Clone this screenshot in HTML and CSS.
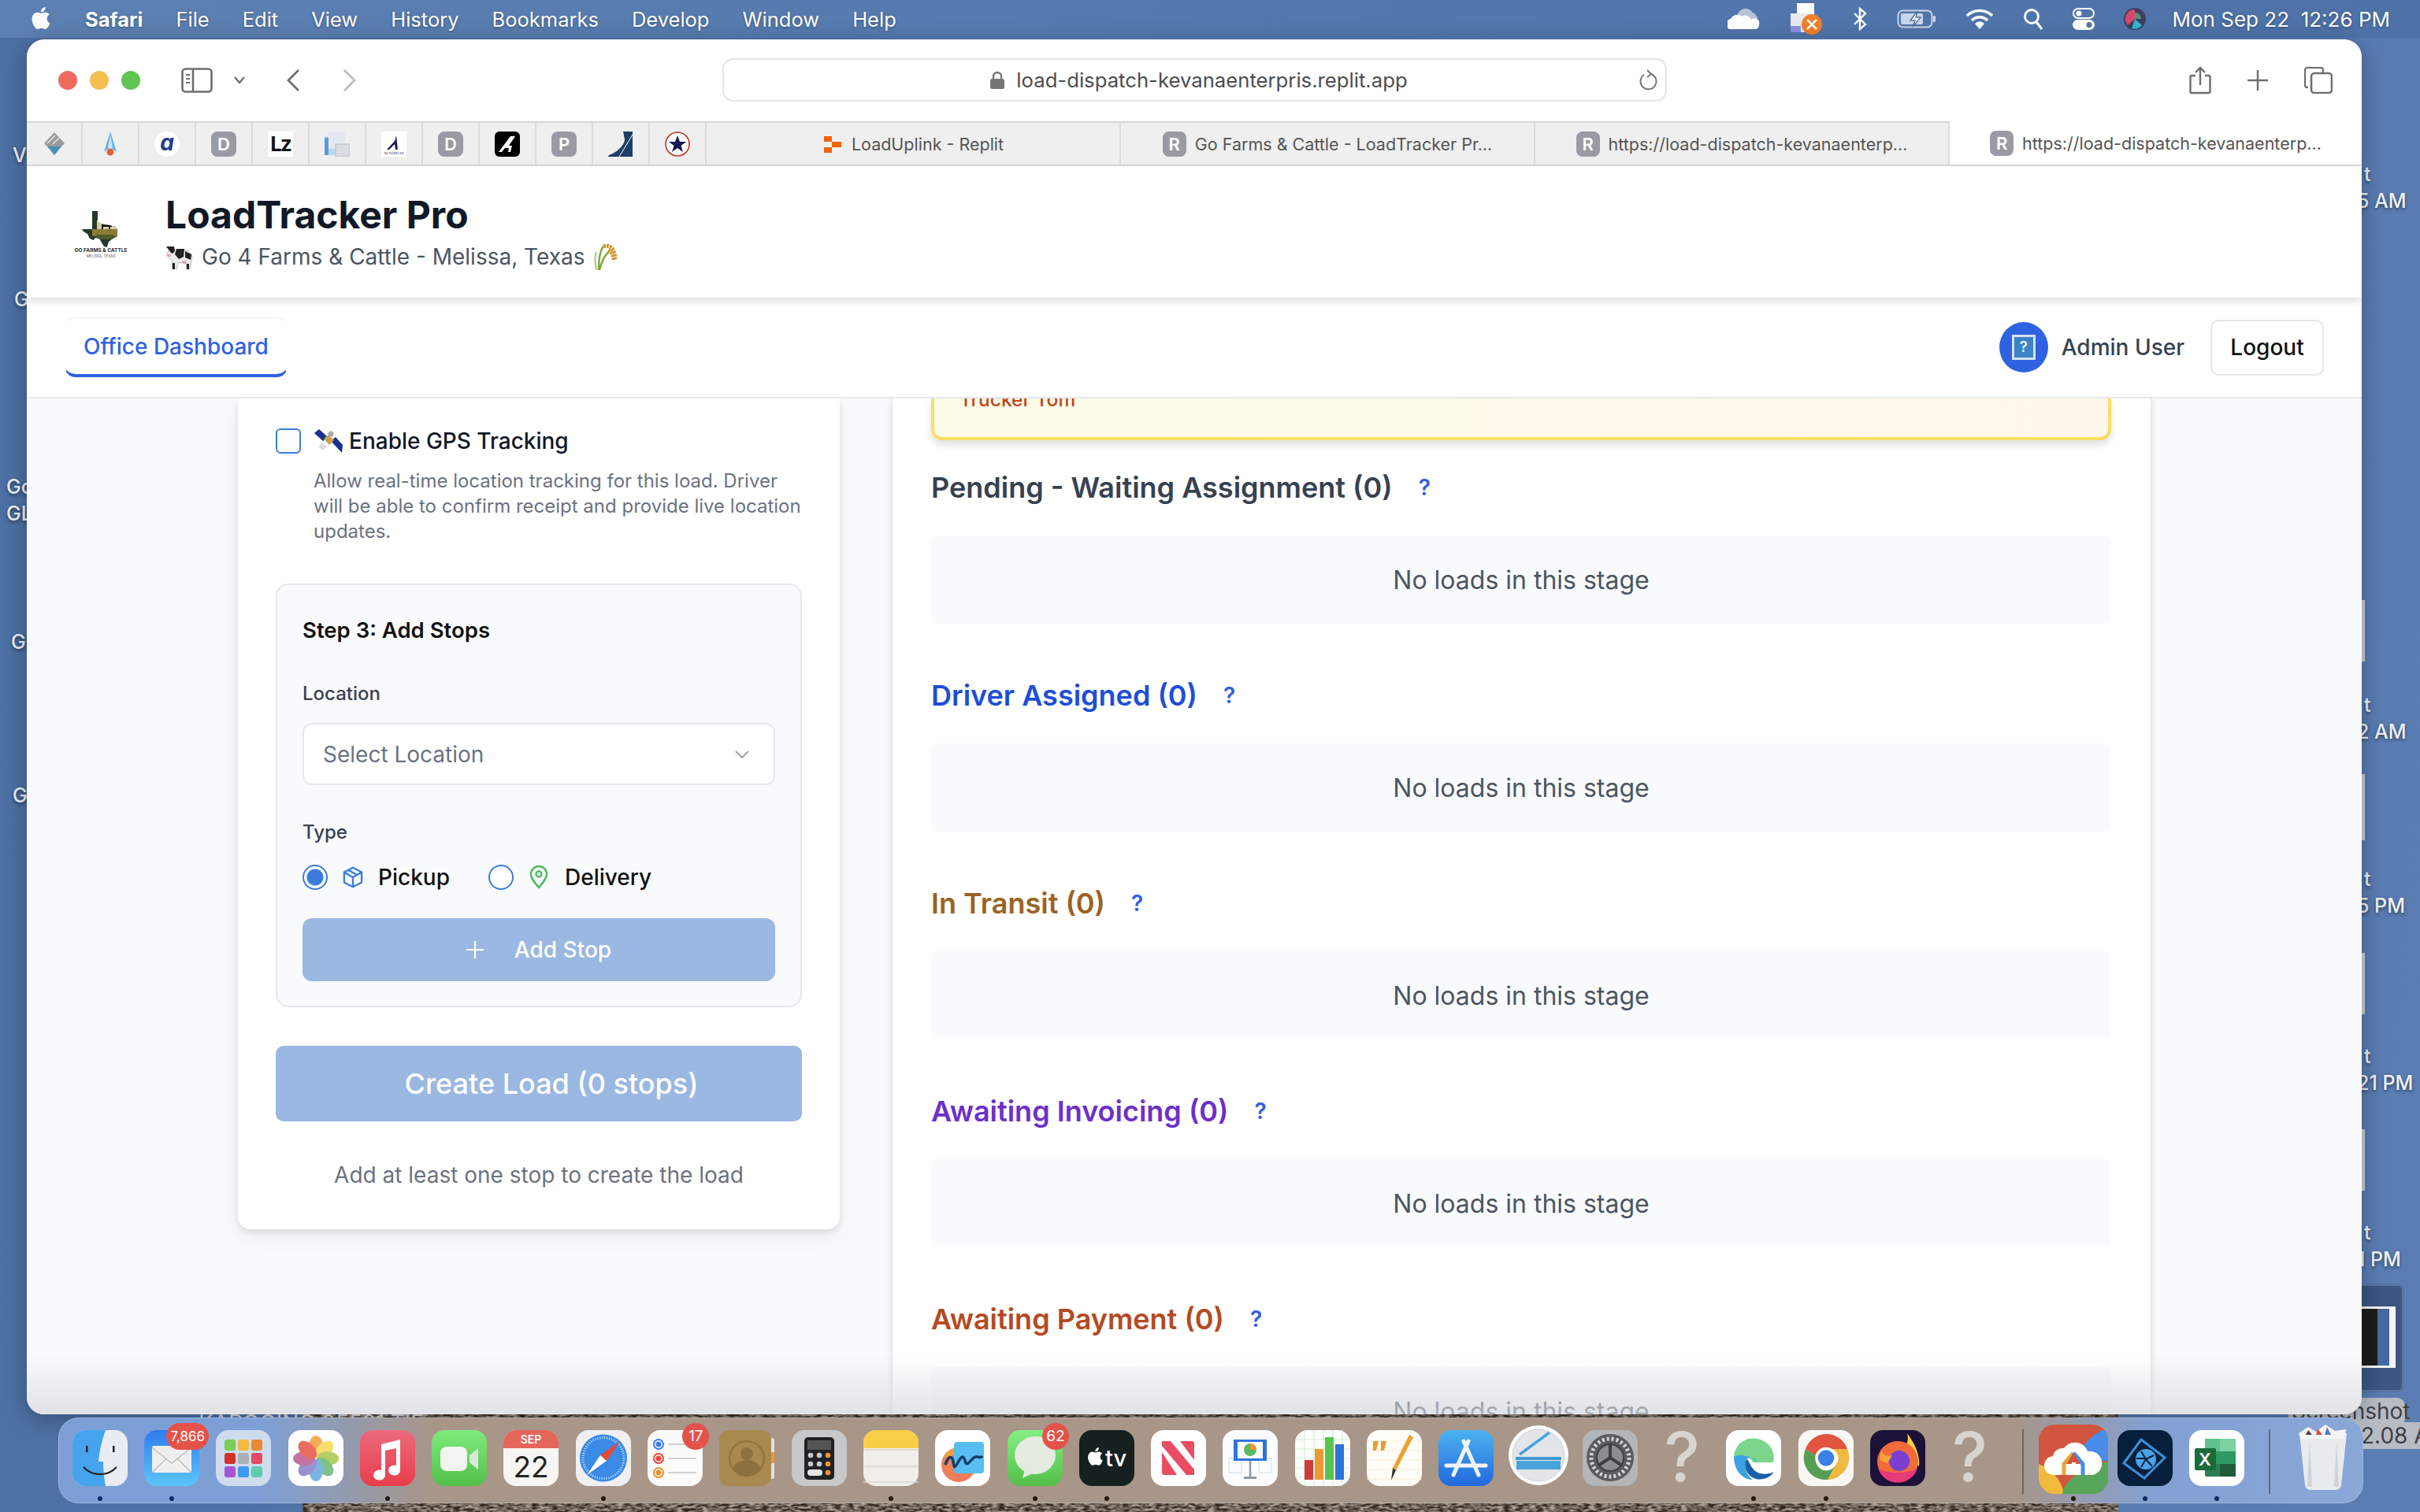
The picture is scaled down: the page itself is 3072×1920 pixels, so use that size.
FILE: index.html
```html
<!DOCTYPE html>
<html lang="en">

<head>
  <meta charset="UTF-8">
  <title>LoadTracker Pro</title>
  <link rel="stylesheet" href="styles.css">
</head>

<body>
  <!-- menu bar -->
  <header class="menubar">
    <svg class="apple" viewBox="0 0 24 24"><path fill="#fff" d="M12.152 6.896c-.948 0-2.415-1.078-3.96-1.04-2.04.027-3.91 1.183-4.961 3.014-2.117 3.675-.546 9.103 1.519 12.09 1.013 1.454 2.208 3.09 3.792 3.039 1.52-.065 2.09-.987 3.935-.987 1.831 0 2.35.987 3.96.948 1.637-.026 2.676-1.48 3.676-2.948 1.156-1.688 1.636-3.325 1.662-3.415-.039-.013-3.182-1.221-3.22-4.857-.026-3.04 2.48-4.494 2.597-4.559-1.429-2.09-3.623-2.324-4.39-2.376-2-.156-3.675 1.09-4.61 1.09zM15.53 3.83c.843-1.012 1.4-2.427 1.245-3.83-1.207.052-2.662.805-3.532 1.818-.78.896-1.454 2.338-1.273 3.714 1.338.104 2.715-.688 3.559-1.701"/></svg>
    <b>Safari</b><span>File</span><span>Edit</span><span>View</span><span>History</span><span>Bookmarks</span><span>Develop</span><span>Window</span><span>Help</span>
    <div class="status">
      <svg width="42" height="28" viewBox="0 0 42 28"><path fill="#b4c3da" d="M12 14a11 11 0 0 1 20-8 9 9 0 0 1 6 10z"/><path fill="#fff" d="M2 27a7 7 0 0 1 2-13 9 9 0 0 1 14-3 8 8 0 0 1 12 4 6 6 0 0 1 10 6 6 6 0 0 1-4 6z"/></svg>
      <svg class="st-print" width="42" height="42" viewBox="0 0 42 42"><rect x="9" y="1" width="22" height="16" fill="#fff"/><rect x="1" y="14" width="30" height="24" fill="#e9e9ee"/><rect x="1" y="30" width="13" height="8" fill="#8b92e0"/><circle cx="28" cy="28" r="13" fill="#ee7f2d"/><path stroke="#fff" stroke-width="2.5" d="M22 22l12 12M34 22l-12 12"/></svg>
      <svg class="st-bt" width="20" height="30" viewBox="0 0 20 30"><path fill="none" stroke="#fff" stroke-width="2.4" d="M3 8l14 14-7 6V2l7 6L3 22"/></svg>
      <svg width="50" height="24" viewBox="0 0 50 24"><rect x="1.5" y="1.5" width="43" height="21" rx="6" fill="none" stroke="#c9d5e8" stroke-width="2"/><rect x="5" y="5" width="28" height="14" rx="2" fill="#c9d5e8"/><rect x="46" y="8" width="3" height="8" rx="1" fill="#c9d5e8"/><path fill="#fff" stroke="#54779f" stroke-width="1.5" d="M26 2l-9 12h6l-3 8 10-12h-6z"/></svg>
      <svg width="36" height="26" viewBox="0 0 36 26"><path fill="none" stroke="#fff" stroke-width="3.6" d="M2 9a23 23 0 0 1 32 0M8 15a14 14 0 0 1 20 0"/><path fill="#fff" d="M18 26l-6-7a8 8 0 0 1 12 0z"/></svg>
      <svg width="26" height="28" viewBox="0 0 26 28"><circle cx="11" cy="11" r="8.5" fill="none" stroke="#fff" stroke-width="2.8"/><path stroke="#fff" stroke-width="3" d="M17 18l7 9"/></svg>
      <svg width="28" height="28" viewBox="0 0 28 28"><rect x="1" y="1" width="26" height="12" rx="6" fill="none" stroke="#fff" stroke-width="2"/><circle cx="8" cy="7" r="3.5" fill="#fff"/><rect x="0" y="15" width="28" height="13" rx="6.5" fill="#fff"/><circle cx="21" cy="21.5" r="3.5" fill="#54779f"/></svg>
      <svg width="28" height="28" viewBox="0 0 28 28"><circle cx="14" cy="14" r="14" fill="#3a3f5e"/><path fill="#d8486a" d="M14 2a12 12 0 0 0-9 20l9-8z"/><path fill="#38b4c8" d="M14 14l9 8a12 12 0 0 1-13 4z"/><path fill="#5e8f6b" d="M14 6a8 8 0 0 1 8 8h-8z"/></svg>
      <span class="clock">Mon Sep 22&nbsp; 12:26 PM</span>
    </div>
  </header>

  <!-- desktop items around the window -->
  <div class="dlabel dl-v">V</div>
  <div class="dlabel dl-g1">G</div>
  <div class="dlabel dl-g2">Go<br>GL</div>
  <div class="dlabel dl-g3">G</div>
  <div class="dlabel dl-g4">G</div>
  <div class="dlabel dr dr-1">t<br>5 AM</div>
  <div class="dlabel dr dr-2">t<br>2 AM</div>
  <div class="dlabel dr dr-3">t<br>5 PM</div>
  <div class="dlabel dr dr-4">t<br>21 PM</div>
  <div class="dlabel dr dr-5">t<br>1 PM</div>
  <div class="sliver sl-1"></div>
  <div class="sliver sl-2"></div>
  <div class="sliver sl-3"></div>
  <div class="sliver sl-4"></div>
  <div class="thumb"><div class="thumb-pic"><div class="thumb-dark"></div></div></div>
  <div class="shot-label">Screenshot</div>
  <div class="shot-time">2.08 AM</div>

  <svg class="rocks" width="2305" height="124">
    <filter id="rock"><feTurbulence type="fractalNoise" baseFrequency="0.12 0.35" numOctaves="2" seed="4"/><feColorMatrix values="0 0 0 0 0.42  0 0 0 0 0.36  0 0 0 0 0.30  2.4 0 0 0 -0.72"/></filter>
    <rect width="2305" height="124" fill="#2f2720"/>
    <rect width="2305" height="124" filter="url(#rock)"/>
  </svg>
  <div class="peek">KAPOOING 05531.TIF</div>

  <!-- safari window -->
  <main class="window">
    <div class="toolbar">
      <div class="lights"><i class="red"></i><i class="yellow"></i><i class="green"></i></div>
      <svg class="tb-side" width="40" height="32" viewBox="0 0 40 32"><rect x="1.5" y="1.5" width="37" height="29" rx="4" fill="none" stroke="#6e6e6e" stroke-width="2.6"/><path stroke="#6e6e6e" stroke-width="2.6" d="M15 2v28"/><path stroke="#6e6e6e" stroke-width="2.2" d="M6 9h5M6 14h5M6 19h5"/></svg>
      <svg class="tb-chev" width="16" height="10" viewBox="0 0 16 10"><path fill="none" stroke="#6e6e6e" stroke-width="2.2" d="M2 1l6 7 6-7"/></svg>
      <svg class="tb-back" width="18" height="30" viewBox="0 0 18 30"><path fill="none" stroke="#6e6e6e" stroke-width="2.8" d="M16 2L3 15l13 13"/></svg>
      <svg class="tb-fwd" width="18" height="30" viewBox="0 0 18 30"><path fill="none" stroke="#bcbcbc" stroke-width="2.8" d="M2 2l13 13L2 28"/></svg>
      <div class="urlbar">
        <svg class="lock" width="20" height="24" viewBox="0 0 20 24"><path fill="none" stroke="#777" stroke-width="2.4" d="M5 11V7a5 5 0 0 1 10 0v4"/><rect x="1" y="10" width="18" height="13" rx="2.5" fill="#777"/></svg>
        <span>load-dispatch-kevanaenterpris.replit.app</span>
        <svg class="reload" width="24" height="28" viewBox="0 0 24 28"><path fill="none" stroke="#777" stroke-width="2" d="M16 6a10 10 0 1 1-9 1"/><path fill="none" stroke="#777" stroke-width="2" d="M11 1l5 5-5 4"/></svg>
      </div>
      <div class="tb-right">
        <svg width="28" height="36" viewBox="0 0 28 36"><path fill="none" stroke="#6e6e6e" stroke-width="2.4" d="M8 12H3a1.5 1.5 0 0 0-1.5 1.5v19A1.5 1.5 0 0 0 3 34h22a1.5 1.5 0 0 0 1.5-1.5v-19A1.5 1.5 0 0 0 25 12h-5M14 24V2M8 8l6-6 6 6"/></svg>
        <svg width="28" height="28" viewBox="0 0 28 28"><path stroke="#6e6e6e" stroke-width="2.4" d="M14 1v26M1 14h26"/></svg>
        <svg width="36" height="34" viewBox="0 0 36 34"><rect x="9" y="8" width="26" height="25" rx="4" fill="#fff" stroke="#6e6e6e" stroke-width="2.6"/><path fill="none" stroke="#6e6e6e" stroke-width="2.2" d="M5 26H4a3 3 0 0 1-3-3V4a3 3 0 0 1 3-3h17a3 3 0 0 1 3 3v3"/></svg>
      </div>
    </div>

    <div class="tabstrip">
      <div class="pin first"><svg width="32" height="32" viewBox="0 0 32 32"><path fill="#9a9a9a" d="M16 1l13 14-4 4H7l-4-4z"/><path fill="#4a8fb5" d="M7 19h18l-9 11z"/><path stroke="#e8e8e8" stroke-width="1.5" d="M10 12l7-7M14 16l8-8M7 15l6-6"/></svg></div>
      <div class="pin"><svg width="32" height="32" viewBox="0 0 32 32"><path fill="#5fb4e8" d="M16 0l8 26-8-6-8 6z"/><path fill="#cfe7f6" d="M16 4l3 17h-6z"/><circle cx="16" cy="26" r="4.5" fill="#e2603a"/></svg></div>
      <div class="pin"><div class="fav-a">a</div></div>
      <div class="pin"><div class="fav-l">D</div></div>
      <div class="pin"><div class="fav-lz">Lz</div></div>
      <div class="pin"><svg width="32" height="32" viewBox="0 0 32 32"><rect x="0" y="6" width="18" height="24" fill="#bcd6ee"/><rect x="4" y="0" width="22" height="22" fill="#e4e8ee"/><rect x="14" y="16" width="18" height="16" fill="#d9dde2" stroke="#bbb"/><rect x="0" y="8" width="5" height="22" fill="#5a9ad6"/></svg></div>
      <div class="pin"><div class="fav-ax"><svg width="32" height="32" viewBox="0 0 32 32"><rect width="32" height="32" fill="#fff"/><path fill="#1d1b5c" d="M19 5l2 18h-3l-1-7-7 7h-3l10-11z"/><text x="16" y="29" font-size="4" text-anchor="middle" fill="#1d1b5c">ACTIONFLEX</text></svg></div></div>
      <div class="pin"><div class="fav-l">D</div></div>
      <div class="pin"><svg width="32" height="32" viewBox="0 0 32 32"><rect width="32" height="32" rx="6" fill="#000"/><path fill="#fff" d="M5 26L20 6h6l-8 12h4l-2 8h-3l1-5h-5l-4 5z"/></svg></div>
      <div class="pin"><div class="fav-l">P</div></div>
      <div class="pin"><svg width="32" height="32" viewBox="0 0 32 32"><path fill="#1f3f66" d="M19 0h12v32H0l1-2c12-4 20-14 20-20z"/><path stroke="#fff" stroke-width="1" d="M31 4L14 32"/></svg></div>
      <div class="pin"><svg width="32" height="32" viewBox="0 0 32 32"><circle cx="16" cy="16" r="15" fill="#fff" stroke="#c0302c" stroke-width="1.6"/><path fill="#15154f" d="M16 5l3 8h8l-6.5 5 2.5 8-7-5-7 5 2.5-8L5 13h8z"/></svg></div>
      <div class="tab">
        <svg width="26" height="26" viewBox="0 0 26 26"><path fill="#f26207" d="M2 3h10v7H2zM12 10h12v7H12zM2 17h10v7H2z"/></svg>
        <span>LoadUplink - Replit</span>
      </div>
      <div class="tab"><i class="fav-r">R</i><span>Go Farms &amp; Cattle - LoadTracker Pr...</span></div>
      <div class="tab"><i class="fav-r">R</i><span>https://load-dispatch-kevanaenterp...</span></div>
      <div class="tab active"><i class="fav-r">R</i><span>https://load-dispatch-kevanaenterp...</span></div>
    </div>

    <div class="app-header">
      <div class="logo">
        <svg width="50" height="46" viewBox="0 0 50 46"><defs><clipPath id="texas"><path d="M14 0h7v14l7 3 8 1 8 2 2 3v9l-6 3-5 4-2 6 1 1-5-1-3-5-3-5-5-1-2 3-5-2-3-6-5-3-2-3 13 0z"/></clipPath></defs><g clip-path="url(#texas)"><rect width="50" height="46" fill="#26382a"/><rect x="20" y="12" width="28" height="11" fill="#d9ccaa"/><rect x="14" y="23" width="32" height="9" fill="#8c7a35"/><rect x="19" y="30" width="22" height="6" fill="#4d5a2c"/><path fill="#15170f" d="M26 15h11l2 2v3h-2v3h-2v-3h-7v3h-2z"/></g></svg>
        <span class="logo-a">GO FARMS &amp; CATTLE</span>
        <span class="logo-b">MELISSA, TEXAS</span>
      </div>
      <div class="brand">
        <h1>LoadTracker Pro</h1>
        <p>
          <svg width="36" height="32" viewBox="0 0 36 32"><path fill="#ececec" stroke="#999" stroke-width=".6" d="M8 6l20 2 6 6-1 8-2 10h-4l-1-9-10 1-2 8H9l-1-11-4-5-3-2 3-6z"/><path fill="#222" d="M1 3h10l1 6-3 3-2-1zM14 6h10l-1 10-6 3-5-6zM25 9l8 4-1 7-7-3zM9 24h3v8H9zM27 25h3v7h-3z"/><path fill="#e6a5b5" d="M21 21h6l-1 4h-4zM2 13h5v3H3z"/></svg>
          <span>Go 4 Farms &amp; Cattle - Melissa, Texas</span>
          <svg width="34" height="34" viewBox="0 0 34 34"><path fill="none" stroke="#7fa83a" stroke-width="2.5" d="M8 34C8 20 9 10 14 4M9 34C12 22 16 14 22 10"/><path fill="none" stroke="#cf9630" stroke-width="5" stroke-dasharray="3 1" d="M14 4c8-3 14 2 15 16M20 9c5 2 7 7 7 12"/><path fill="none" stroke="#a9c27a" stroke-width="2" d="M5 33C3 24 3 16 5 11"/></svg>
        </p>
      </div>
    </div>

    <nav class="app-nav">
      <a class="nav-tab">Office Dashboard</a>
      <div class="user">
        <div class="avatar"><i>?</i></div>
        <span>Admin User</span>
        <button class="logout">Logout</button>
      </div>
    </nav>

    <div class="content">
      <section class="form-card">
        <label class="gps">
          <i class="checkbox"></i>
          <svg width="36" height="30" viewBox="0 0 36 30"><path fill="#1b2f8f" d="M0 5l6-5 11 10-6 5zM21 15l6-5 9 10-1 10z"/><path fill="#c9a24a" d="M12 12l6-5 7 7-6 6z"/><path fill="#dcdcdc" d="M9 17l7 5-5 5-5-4z"/><circle cx="21" cy="6" r="3.5" fill="#a8a8a8"/></svg>
          <span>Enable GPS Tracking</span>
        </label>
        <p class="gps-help">Allow real-time location tracking for this load. Driver will be able to confirm receipt and provide live location updates.</p>

        <div class="stops">
          <h3>Step 3: Add Stops</h3>
          <div class="field-label first">Location</div>
          <div class="select">
            <span>Select Location</span>
            <svg width="20" height="12" viewBox="0 0 20 12"><path fill="none" stroke="#a3a3a3" stroke-width="2" d="M2 2l8 8 8-8"/></svg>
          </div>
          <div class="field-label second">Type</div>
          <div class="radios">
            <i class="radio checked"></i>
            <svg class="r-icon" width="28" height="30" viewBox="0 0 24 24" fill="none" stroke="#3b7ddd" stroke-width="2" stroke-linejoin="round"><path d="M12 1.5l9.5 5v11L12 22.5l-9.5-5v-11zM2.5 6.5L12 12l9.5-5.500M12 12v10.5M7 4l9.500 5.500"/></svg>
            <span class="r-pickup">Pickup</span>
            <i class="radio"></i>
            <svg class="r-icon r-pin" width="24" height="30" viewBox="0 0 24 30" fill="none" stroke="#4cb860" stroke-width="2.4"><path d="M12 28C6 21 2 16 2 11a10 10 0 0 1 20 0c0 5-4 10-10 17z"/><circle cx="12" cy="11" r="3.5"/></svg>
            <span>Delivery</span>
          </div>
          <button class="add-stop">
            <svg width="22" height="22" viewBox="0 0 22 22"><path stroke="#fff" stroke-width="2.2" d="M11 0v22M0 11h22"/></svg>
            <span>Add Stop</span>
          </button>
        </div>

        <button class="create">Create Load (0 stops)</button>
        <p class="hint">Add at least one stop to create the load</p>
      </section>

      <section class="board">
        <div class="alert">
          <span class="alert-who">Trucker Tom</span>
          <span class="alert-msg">p g y g p</span>
        </div>

        <div class="stage">
          <h2 class="c-pending">Pending - Waiting Assignment (0)<em>?</em></h2>
          <div class="empty">No loads in this stage</div>
        </div>
        <div class="stage">
          <h2 class="c-driver">Driver Assigned (0)<em>?</em></h2>
          <div class="empty">No loads in this stage</div>
        </div>
        <div class="stage">
          <h2 class="c-transit">In Transit (0)<em>?</em></h2>
          <div class="empty">No loads in this stage</div>
        </div>
        <div class="stage">
          <h2 class="c-invoice">Awaiting Invoicing (0)<em>?</em></h2>
          <div class="empty">No loads in this stage</div>
        </div>
        <div class="stage">
          <h2 class="c-payment">Awaiting Payment (0)<em>?</em></h2>
          <div class="empty">No loads in this stage</div>
        </div>
      </section>
      <div class="fade"></div>
    </div>
  </main>

  <!-- dock -->
  <footer class="dock">
    <div class="slot on"><svg width="70" height="71" viewBox="0 0 70 71"><rect width="70" height="71" rx="16" fill="#e9ecf1"/><path fill="#46a4ef" d="M16 0h26c-5 14-8 27-9 40h6c0 10 1 21 3 31H16A16 16 0 0 1 0 55V16A16 16 0 0 1 16 0z"/><path fill="#1f1f1f" d="M17 20h2.5v8H17zM51 20h2.5v8H51z"/><path fill="none" stroke="#1f1f1f" stroke-width="2" d="M14 47c11 12 31 12 42 0"/></svg></div>
    <div class="slot on"><svg width="70" height="71" viewBox="0 0 70 71"><defs><linearGradient id="gMail" x1="0" y1="0" x2="0" y2="1"><stop offset="0" stop-color="#2d7cf0"/><stop offset="1" stop-color="#5cc6fa"/></linearGradient></defs><rect width="70" height="71" rx="16" fill="url(#gMail)"/><rect x="10" y="20" width="50" height="34" rx="2" fill="#efefef"/><path fill="none" stroke="#bdbdbd" stroke-width="1.5" d="M10 22l25 20 25-20M10 54l18-18M60 54L42 36"/></svg><b class="badge wide">7,866</b></div>
    <div class="slot"><svg width="70" height="71" viewBox="0 0 70 71"><rect width="70" height="71" rx="16" fill="#cfdcee"/><rect x="11" y="12" width="14" height="14" rx="3" fill="#77cf54"/><rect x="28" y="12" width="14" height="14" rx="3" fill="#f4b93d"/><rect x="45" y="12" width="14" height="14" rx="3" fill="#e88a32"/><rect x="11" y="29" width="14" height="14" rx="3" fill="#cf3326"/><rect x="28" y="29" width="14" height="14" rx="3" fill="#a9b1b7"/><rect x="45" y="29" width="14" height="14" rx="3" fill="#e6495f"/><rect x="11" y="46" width="14" height="14" rx="3" fill="#a554d8"/><rect x="28" y="46" width="14" height="14" rx="3" fill="#3d9bf0"/><rect x="45" y="46" width="14" height="14" rx="3" fill="#5ecdb2"/></svg></div>
    <div class="slot"><svg width="70" height="71" viewBox="0 0 70 71"><rect width="70" height="71" rx="16" fill="#fff"/><g opacity=".8"><ellipse cx="35" cy="21" rx="9" ry="14" fill="#f09a2e"/><ellipse cx="35" cy="21" rx="9" ry="14" fill="#f6d84a" transform="rotate(45 35 36)"/><ellipse cx="35" cy="21" rx="9" ry="14" fill="#a3c23f" transform="rotate(90 35 36)"/><ellipse cx="35" cy="21" rx="9" ry="14" fill="#5fb36b" transform="rotate(135 35 36)"/><ellipse cx="35" cy="21" rx="9" ry="14" fill="#5aa3de" transform="rotate(180 35 36)"/><ellipse cx="35" cy="21" rx="9" ry="14" fill="#8278c4" transform="rotate(225 35 36)"/><ellipse cx="35" cy="21" rx="9" ry="14" fill="#b5528f" transform="rotate(270 35 36)"/><ellipse cx="35" cy="21" rx="9" ry="14" fill="#e4493a" transform="rotate(315 35 36)"/></g></svg></div>
    <div class="slot on"><svg width="70" height="71" viewBox="0 0 70 71"><defs><linearGradient id="gMusic" x1="0" y1="0" x2="0" y2="1"><stop offset="0" stop-color="#ec6a7c"/><stop offset="1" stop-color="#e93d4c"/></linearGradient></defs><rect width="70" height="71" rx="16" fill="url(#gMusic)"/><path fill="#fff" d="M27 18l24-6v39a7.5 6.5 0 1 1-5-6V23l-14 3v31a7.5 6.5 0 1 1-5-6z"/></svg></div>
    <div class="slot"><svg width="70" height="71" viewBox="0 0 70 71"><defs><linearGradient id="gFace" x1="0" y1="0" x2="0" y2="1"><stop offset="0" stop-color="#7feb7c"/><stop offset="1" stop-color="#53c049"/></linearGradient></defs><rect width="70" height="71" rx="16" fill="url(#gFace)"/><rect x="11" y="21" width="34" height="31" rx="8" fill="#f1f4ef"/><path fill="#d9ecd6" d="M48 32l11-9v27l-11-9z"/></svg></div>
    <div class="slot"><svg width="70" height="71" viewBox="0 0 70 71"><rect width="70" height="71" rx="16" fill="#f7f6f4"/><path fill="#e4655a" d="M0 23V16A16 16 0 0 1 16 0h38a16 16 0 0 1 16 16v7z"/><text x="35" y="17" font-family="Inter" font-size="14" font-weight="600" fill="#fff" text-anchor="middle">SEP</text><text x="35" y="60" font-family="Inter" font-size="37" fill="#222" text-anchor="middle">22</text></svg></div>
    <div class="slot on"><svg width="70" height="71" viewBox="0 0 70 71"><rect width="70" height="71" rx="16" fill="#f0f0f2"/><circle cx="35" cy="35.5" r="30" fill="#3a8ae6"/><circle cx="35" cy="35.5" r="26" fill="none" stroke="#cfe4fa" stroke-width="3" stroke-dasharray="1 2"/><path fill="#e8492f" d="M56 14L31 32l8 7z"/><path fill="#fff" d="M14 57l25-18-8-7z"/></svg></div>
    <div class="slot"><svg width="70" height="71" viewBox="0 0 70 71"><rect width="70" height="71" rx="16" fill="#fbfbfb"/><circle cx="14" cy="18" r="6" fill="none" stroke="#3a7ff0" stroke-width="2"/><circle cx="14" cy="18" r="3.5" fill="#3a7ff0"/><circle cx="14" cy="36" r="6" fill="none" stroke="#e5453c" stroke-width="2"/><circle cx="14" cy="36" r="3.5" fill="#e5453c"/><circle cx="14" cy="54" r="6" fill="none" stroke="#ec9130" stroke-width="2"/><circle cx="14" cy="54" r="3.5" fill="#ec9130"/><path stroke="#c4c4c4" stroke-width="1.5" d="M26 18h36M26 36h36M26 54h36"/></svg><b class="badge">17</b></div>
    <div class="slot"><svg width="70" height="71" viewBox="0 0 70 71"><rect x="60" y="10" width="10" height="52" rx="3" fill="#dfe3e6"/><rect x="62" y="28" width="8" height="14" fill="#e9993a"/><rect width="66" height="71" rx="12" fill="#a9894f"/><circle cx="35" cy="36" r="22" fill="none" stroke="#8d7240" stroke-width="2"/><circle cx="35" cy="30" r="8" fill="#8d7240"/><path fill="#8d7240" d="M18 50a17 12 0 0 1 34 0 22 22 0 0 1-34 0z"/></svg></div>
    <div class="slot"><svg width="70" height="71" viewBox="0 0 70 71"><rect width="70" height="71" rx="16" fill="#c6c8ca"/><rect x="16" y="9" width="38" height="54" rx="5" fill="#202225"/><rect x="20" y="13" width="30" height="12" fill="#555"/><g fill="#c8c8c8"><circle cx="24" cy="32" r="3.3"/><circle cx="35" cy="32" r="3.3"/><circle cx="24" cy="43" r="3.3"/><circle cx="35" cy="43" r="3.3"/></g><g fill="#ef9430"><circle cx="46" cy="32" r="3.3"/><circle cx="46" cy="43" r="3.3"/><circle cx="46" cy="54" r="3.3"/></g><rect x="20" y="50" width="19" height="8" rx="4" fill="#e6e6e6"/></svg></div>
    <div class="slot on"><svg width="70" height="71" viewBox="0 0 70 71"><rect width="70" height="71" rx="16" fill="#f1efe9"/><path fill="#f8ce47" d="M0 23V16A16 16 0 0 1 16 0h38a16 16 0 0 1 16 16v7z"/><path stroke="#d9d6cf" stroke-width="1.5" d="M0 46h70M0 66h70"/><path stroke="#c9c6bf" stroke-width="2" stroke-dasharray="1 1" d="M0 25h70"/></svg></div>
    <div class="slot"><svg width="70" height="71" viewBox="0 0 70 71"><rect width="70" height="71" rx="16" fill="#fff"/><circle cx="30" cy="44" r="22" fill="#ef7f5a"/><path fill="#f0a13a" d="M30 22a22 22 0 0 0-20 13l12-3 8-4z"/><rect x="24" y="15" width="38" height="40" rx="4" fill="#58bdf0"/><path fill="none" stroke="#153d6a" stroke-width="3.5" d="M13 44c4-12 9-12 10-4s1 10 6 1 7-9 9-2 4 3 10-3 8 2 12-3"/></svg></div>
    <div class="slot on"><svg width="70" height="71" viewBox="0 0 70 71"><defs><linearGradient id="gMsg" x1="0" y1="0" x2="0" y2="1"><stop offset="0" stop-color="#84ef82"/><stop offset="1" stop-color="#55bf4a"/></linearGradient></defs><rect width="70" height="71" rx="16" fill="url(#gMsg)"/><ellipse cx="35" cy="32" rx="26" ry="24" fill="#e4ece0"/><path fill="#e4ece0" d="M22 50l-3 11 13-6z"/></svg><b class="badge">62</b></div>
    <div class="slot on"><svg width="70" height="71" viewBox="0 0 70 71"><rect width="70" height="71" rx="16" fill="#15201f"/><g transform="translate(9 22) scale(.95)"><path fill="#fff" d="M12.152 6.896c-.948 0-2.415-1.078-3.96-1.04-2.04.027-3.91 1.183-4.961 3.014-2.117 3.675-.546 9.103 1.519 12.09 1.013 1.454 2.208 3.09 3.792 3.039 1.52-.065 2.09-.987 3.935-.987 1.831 0 2.35.987 3.96.948 1.637-.026 2.676-1.48 3.676-2.948 1.156-1.688 1.636-3.325 1.662-3.415-.039-.013-3.182-1.221-3.22-4.857-.026-3.04 2.48-4.494 2.597-4.559-1.429-2.09-3.623-2.324-4.39-2.376-2-.156-3.675 1.09-4.61 1.09zM15.53 3.83c.843-1.012 1.4-2.427 1.245-3.83-1.207.052-2.662.805-3.532 1.818-.78.896-1.454 2.338-1.273 3.714 1.338.104 2.715-.688 3.559-1.701"/></g><text x="33" y="46" font-family="Inter" font-size="29" font-weight="500" fill="#fff">tv</text></svg></div>
    <div class="slot"><svg width="70" height="71" viewBox="0 0 70 71"><rect width="70" height="71" rx="16" fill="#fff"/><path fill="#e84d63" d="M14 14h11l30 36v7H45L14 20zM14 28l19 29H17a3 3 0 0 1-3-3zM37 14h15a3 3 0 0 1 3 3v21z"/></svg></div>
    <div class="slot"><svg width="70" height="71" viewBox="0 0 70 71"><rect width="70" height="71" rx="16" fill="#fafcff"/><path stroke="#dbe7f5" stroke-width="1.5" fill="none" d="M8 36h16v18H8zM46 36h16v18H46zM24 36h22"/><rect x="14" y="12" width="42" height="27" fill="#2f73dc"/><rect x="19" y="15" width="32" height="21" fill="#fff"/><circle cx="35" cy="25" r="8" fill="#5cb85c"/><path fill="#ef9430" d="M35 17a8 8 0 0 1 8 8h-8z"/><path stroke="#8c98a8" stroke-width="2.5" d="M35 39v21"/><rect x="27" y="59" width="16" height="3" fill="#8c98a8"/></svg></div>
    <div class="slot"><svg width="70" height="71" viewBox="0 0 70 71"><rect width="70" height="71" rx="16" fill="#fbfefb"/><path stroke="#d5edd5" d="M0 12h70M0 24h70M0 36h70M0 48h70M0 60h70M12 0v71M24 0v71M36 0v71M48 0v71M60 0v71"/><rect x="12" y="38" width="11" height="25" fill="#cf3b3b"/><rect x="25" y="24" width="11" height="39" fill="#ee9a33"/><rect x="38" y="9" width="11" height="54" fill="#56c44f"/><rect x="51" y="18" width="11" height="45" fill="#2f72d8"/></svg></div>
    <div class="slot"><svg width="70" height="71" viewBox="0 0 70 71"><rect width="70" height="71" rx="16" fill="#fffdf8"/><path stroke="#fbecd4" d="M0 14h70M0 26h70M0 38h70M0 50h70M0 62h70"/><path fill="#f09a33" d="M8 14h7l-3 12H8zM18 14h7l-3 12h-4z"/><path fill="#f0a030" d="M54 6l5 3-22 42-4-3z"/><path fill="#333" d="M33 48l4 3-6 13z"/></svg></div>
    <div class="slot"><svg width="70" height="71" viewBox="0 0 70 71"><defs><linearGradient id="gStore" x1="0" y1="0" x2="0" y2="1"><stop offset="0" stop-color="#4cb2ef"/><stop offset="1" stop-color="#2268de"/></linearGradient></defs><rect width="70" height="71" rx="16" fill="url(#gStore)"/><path fill="none" stroke="#f1f4f8" stroke-width="5" stroke-linecap="round" d="M38 14l-19 43M32 14l19 43M10 45h50"/></svg></div>
    <div class="slot"><svg class="big" width="78" height="78" viewBox="0 0 78 78"><circle cx="39" cy="39" r="38" fill="#fff"/><circle cx="39" cy="39" r="33" fill="#e4e5e8" stroke="#cfd0d4"/><rect x="10" y="41" width="58" height="4" fill="#3f98cf"/><path fill="#4aa3da" d="M11 46h56v11H11z"/><path stroke="#4aa3da" stroke-width="3.5" d="M15 38l38-28"/></svg></div>
    <div class="slot"><svg width="70" height="71" viewBox="0 0 70 71"><rect width="70" height="71" rx="16" fill="#b2b6b8"/><circle cx="35" cy="35" r="30" fill="#5a5c5e"/><circle cx="35" cy="35" r="24" fill="none" stroke="#d2d4d6" stroke-width="5" stroke-dasharray="3 3"/><circle cx="35" cy="35" r="17" fill="#8b8d8f" stroke="#3e4042" stroke-width="2"/><path stroke="#3e4042" stroke-width="4" d="M35 35V17M35 35l15 10M35 35l-15 10"/></svg></div>
    <div class="slot"><span class="ghost">?</span></div>
    <div class="slot on"><svg width="70" height="71" viewBox="0 0 70 71"><rect width="70" height="71" rx="16" fill="#fff"/><path fill="#7bd58a" d="M10 34C12 14 30 6 46 13c12 5 17 18 14 28H34C31 33 22 30 10 34z"/><path fill="#3aa3e0" d="M10 34c0 16 10 29 24 29-8-6-12-16-8-26 4-3 12-2 14 4-8-8-22-12-30-7z"/><path fill="#1b5fa8" d="M26 37c-5 11 2 22 12 25 10 2 18-2 23-9-8 4-20 4-26-3s-5-11-9-13z"/></svg></div>
    <div class="slot on"><svg width="70" height="71" viewBox="0 0 70 71"><rect width="70" height="71" rx="16" fill="#faf8f4"/><path fill="#e05440" d="M9 24A28 28 0 0 1 62 24H35a12 12 0 0 0-12 9z"/><path fill="#f0b942" d="M62 24a28 28 0 0 1-25 39l11-20a12 12 0 0 0-13-19z"/><path fill="#559f55" d="M9 24a28 28 0 0 0 28 39l11-20a12 12 0 0 1-25-10z"/><circle cx="35" cy="35.5" r="12" fill="#3d7fe4" stroke="#fff" stroke-width="3.5"/></svg></div>
    <div class="slot"><svg width="70" height="71" viewBox="0 0 70 71"><rect width="70" height="71" rx="16" fill="#1c1138"/><path fill="#ffd23e" d="M47 4c9 12 17 28 15 42L40 24c8-6 9-12 7-20z"/><circle cx="35" cy="40" r="26" fill="#f26b3a"/><path fill="#e8397a" d="M10 48a26 26 0 0 0 50 0c-10 8-40 8-50 0z"/><circle cx="37" cy="39" r="13" fill="#7a3fd2"/><path fill="#f7a33a" d="M14 24c2 8 6 10 14 8l-6 10-10-4z"/></svg></div>
    <div class="slot"><span class="ghost">?</span></div>
    <i class="dock-sep sep-a"></i>
    <div class="slot on"><svg class="big" width="88" height="88" viewBox="0 0 88 88"><defs><clipPath id="clipG"><rect width="88" height="88" rx="20"/></clipPath></defs><g clip-path="url(#clipG)"><rect width="88" height="88" fill="#d2553f"/><path fill="#4a8ce8" d="M88 4C62 14 52 30 50 46h38z"/><path fill="#f0bb3c" d="M0 50c16 6 28 18 32 38H0z"/><path fill="#57a65a" d="M88 46v42H30c4-22 30-32 58-42z"/></g><path fill="#fff" d="M20 64a12 12 0 0 1-2-24 13 13 0 0 1 14-10 17 17 0 0 1 30 4 15 15 0 0 1 6 30z"/><path fill="none" stroke="#eba634" stroke-width="5" d="M32 64V50l12-14"/><path fill="none" stroke="#4a8ce8" stroke-width="5" d="M56 64V50L44 36"/><path fill="#d2553f" d="M35 50L44 36l9 14z"/><path fill="#fff" d="M42 48h5v16h-5z"/></svg></div>
    <div class="slot on"><svg width="70" height="71" viewBox="0 0 70 71"><rect width="70" height="71" rx="16" fill="#071f3a"/><path fill="none" stroke="#3e8fd8" stroke-width="3" d="M30 12l30 23-26 26L8 42z"/><circle cx="36" cy="37" r="13" fill="#4ba3ea"/><path stroke="#071f3a" stroke-width="2" d="M30 27l6 10M46 32l-10 5M44 46l-8-9M30 47l6-10M24 36h12"/></svg></div>
    <div class="slot on"><svg width="70" height="71" viewBox="0 0 70 71"><rect width="70" height="71" rx="16" fill="#fff"/><rect x="20" y="11" width="39" height="48" rx="2" fill="#2d7d4f"/><rect x="20" y="11" width="39" height="16" fill="#5fc18e"/><rect x="39" y="11" width="20" height="16" fill="#7bd2a4"/><rect x="20" y="27" width="39" height="16" fill="#2f9b63"/><rect x="39" y="43" width="20" height="16" fill="#1f5c3a"/><rect x="7" y="23" width="27" height="28" rx="2" fill="#1b6b3c"/><text x="20" y="45" font-family="Inter" font-size="22" font-weight="600" fill="#fff" text-anchor="middle">X</text></svg></div>
    <i class="dock-sep sep-b"></i>
    <div class="slot"><svg width="70" height="85" viewBox="0 0 70 85" class="trash"><path fill="#e8ebee" d="M5 12h60l-7 66a7 7 0 0 1-7 6H19a7 7 0 0 1-7-6z"/><path fill="#cfd3d7" d="M18 22l3 58h-6zM52 22l-3 58h6z"/><path fill="#f5f5f5" d="M4 12l12-8 10 6 12-9 12 8 14-2-2 12H7z"/><path fill="#d95040" d="M28 6l6 8h-8z"/><path fill="#4a7fd0" d="M40 4l5 10h-8z"/><path fill="#444" d="M16 8l5 6h-8z"/></svg></div>
  </footer>
</body>

</html>
```

FILE: styles.css
```css
* {
  margin: 0;
  padding: 0;
  box-sizing: border-box;
}

body {
  position: relative;
  width: 3072px;
  height: 1920px;
  overflow: hidden;
  background: linear-gradient(100deg, #4c70a4, #5a7db4);
  font-family: Inter, "Noto Sans", sans-serif;
}

i, em {
  font-style: normal;
}

/* menu bar */
.menubar {
  display: flex;
  align-items: center;
  gap: 42px;
  height: 48px;
  padding-left: 38px;
  padding-right: 38px;
  background: linear-gradient(90deg, #5d80b3, #5479ae 50%, #4e72a8);
  color: #fff;
  font-size: 25.5px;
  text-shadow: 0 1px 3px rgba(0, 0, 0, .35);
}

.menubar b {
  font-weight: 700;
}

.apple {
  width: 28px;
  height: 32px;
  margin-top: -2px;
}

.status {
  display: flex;
  align-items: center;
  gap: 37px;
  margin-left: auto;
}

.status svg {
  flex: none;
}

.clock {
  margin-left: -3px;
  white-space: nowrap;
  font-size: 26px;
}

/* desktop items */
.dlabel {
  position: absolute;
  color: #eef1f5;
  font-size: 25px;
  line-height: 34px;
  font-weight: 500;
  text-shadow: 0 2px 4px rgba(0, 0, 0, .5);
}

.dl-v { left: 16px; top: 180px; }
.dl-g1 { left: 18px; top: 363px; }
.dl-g2 { left: 8px; top: 601px; }
.dl-g3 { left: 14px; top: 798px; }
.dl-g4 { left: 16px; top: 993px; }

.dr {
  left: 2992px;
  text-align: left;
  text-indent: 9px;
  white-space: nowrap;
}

.dr-1 { top: 204px; }
.dr-2 { top: 878px; }
.dr-3 { top: 1099px; }
.dr-4 { top: 1324px; }
.dr-5 { top: 1548px; }

.sliver {
  position: absolute;
  left: 2998px;
  width: 4px;
  height: 78px;
  background: #cdd2da;
}

.sl-1 { top: 762px; }
.sl-2 { top: 983px; height: 84px; }
.sl-3 { top: 1210px; }
.sl-4 { top: 1434px; }

.thumb {
  position: absolute;
  left: 2980px;
  top: 1630px;
  width: 72px;
  height: 138px;
  padding-top: 26px;
  background: #3c5682;
  border: 3px solid #5b75a2;
  border-radius: 8px;
}

.thumb-pic {
  width: 58px;
  height: 78px;
  padding: 3px 8px 3px 0;
  background: #f4f4f4;
}

.thumb-dark {
  height: 100%;
  background: linear-gradient(90deg, #1c1c1c 70%, #466aa0 70%);
}

.shot-label {
  position: absolute;
  left: 2905px;
  top: 1775px;
  width: 148px;
  height: 36px;
  padding-left: 4px;
  border-radius: 10px;
  background: #b7bcc3;
  color: #3d4148;
  font-size: 28px;
  line-height: 34px;
  white-space: nowrap;
}

.shot-time {
  position: absolute;
  left: 2980px;
  top: 1806px;
  width: 92px;
  height: 34px;
  padding-left: 17px;
  background: #b7bcc3;
  color: #3d4148;
  font-size: 28px;
  line-height: 34px;
  white-space: nowrap;
}

.rocks {
  position: absolute;
  left: 384px;
  top: 1796px;
}

.peek {
  position: absolute;
  left: 252px;
  top: 1792px;
  color: #d9dce0;
  font-size: 28px;
  line-height: 30px;
  white-space: nowrap;
}

/* window */
.window {
  position: absolute;
  left: 34px;
  top: 50px;
  display: flex;
  flex-direction: column;
  width: 2964px;
  height: 1746px;
  overflow: hidden;
  background: #fff;
  border-radius: 22px;
  box-shadow: 0 6px 30px rgba(0, 0, 0, .3);
}

.toolbar {
  display: flex;
  align-items: center;
  flex: none;
  height: 104px;
  padding-left: 40px;
}

.lights {
  display: flex;
  gap: 16px;
}

.lights i {
  width: 24px;
  height: 24px;
  border-radius: 50%;
}

.red { background: #ee6a5f; }
.yellow { background: #f5bd4f; }
.green { background: #61c554; }

.tb-side { margin-left: 52px; }
.tb-chev { margin-left: 26px; }
.tb-back { margin-left: 51px; }
.tb-fwd { margin-left: 54px; }

.urlbar {
  display: flex;
  align-items: center;
  position: relative;
  justify-content: center;
  gap: 14px;
  width: 1199px;
  height: 55px;
  margin-left: 464px;
  margin-top: -1px;
  padding-left: 10px;
  border: 2px solid #e4e4e6;
  border-radius: 14px;
  color: #4d4d4d;
  font-size: 25.7px;
}

.reload {
  position: absolute;
  right: 10px;
  top: 12px;
}

.tb-right {
  display: flex;
  align-items: center;
  gap: 45px;
  margin-left: 663px;
}

.tabstrip {
  display: flex;
  flex: none;
  height: 57px;
  background: #efefef;
  border-top: 2px solid #d6d6d6;
  border-bottom: 2px solid #dcdcdc;
}

.pin {
  display: flex;
  align-items: center;
  justify-content: center;
  flex: none;
  width: 72px;
  border-right: 2px solid #dcdcdc;
}

.pin.first {
  width: 71px;
}

.fav-l,
.fav-r {
  display: flex;
  align-items: center;
  justify-content: center;
  width: 32px;
  height: 32px;
  border-radius: 8px;
  background: #9a9aa4;
  color: #fff;
  font-size: 22px;
  font-weight: 600;
}

.fav-r {
  flex: none;
  width: 30px;
}

.fav-a {
  width: 32px;
  height: 32px;
  border-radius: 50%;
  background: #fff;
  color: #233a8e;
  font-size: 28px;
  font-weight: 700;
  font-style: italic;
  line-height: 28px;
  text-align: center;
}

.fav-lz {
  width: 32px;
  height: 32px;
  background: #fff;
  color: #111;
  font-size: 26px;
  font-weight: 700;
  line-height: 32px;
  text-align: center;
  letter-spacing: -2px;
}

.fav-ax {
  width: 32px;
  height: 32px;
}

.tab {
  display: flex;
  align-items: center;
  justify-content: center;
  gap: 11px;
  flex: none;
  width: 526px;
  border-right: 2px solid #dcdcdc;
  color: #555;
  font-size: 21.5px;
  white-space: nowrap;
}

.tab.active {
  flex: 1;
  width: auto;
  margin-top: -2px;
  background: #fff;
  border-right: 0;
}

/* app header */
.app-header {
  position: relative;
  z-index: 1;
  display: flex;
  align-items: center;
  gap: 50px;
  flex: none;
  height: 167px;
  padding-left: 62px;
  padding-top: 2px;
  background: #fff;
  box-shadow: 0 4px 10px rgba(0, 0, 0, .14);
}

.logo {
  display: flex;
  flex-direction: column;
  align-items: center;
  width: 64px;
  margin-top: 6px;
}

.logo-a {
  color: #2b2b2b;
  font-size: 6.5px;
  font-weight: 700;
  line-height: 9px;
  white-space: nowrap;
}

.logo-b {
  color: #555;
  font-size: 4.5px;
  line-height: 6px;
  white-space: nowrap;
}

.brand h1 {
  color: #111827;
  font-size: 48px;
  font-weight: 700;
  line-height: 56px;
}

.brand p {
  display: flex;
  align-items: center;
  gap: 10px;
  height: 40px;
  margin-top: 5px;
  color: #4b5563;
  font-size: 28px;
}

/* app nav */
.app-nav {
  display: flex;
  align-items: center;
  flex: none;
  height: 128px;
  padding: 0 48px;
  background: #fff;
  border-bottom: 2px solid #e5e7eb;
}

.nav-tab {
  display: flex;
  align-items: center;
  justify-content: center;
  width: 283px;
  height: 76px;
  border: 1px solid transparent;
  border-top-color: #e3e9f6;
  border-bottom: 4px solid #2f62e0;
  border-radius: 14px;
  color: #2f62e0;
  font-size: 28px;
  font-weight: 500;
}

.user {
  display: flex;
  align-items: center;
  margin-left: auto;
  color: #374151;
  font-size: 28px;
  font-weight: 500;
}

.avatar {
  display: flex;
  align-items: center;
  justify-content: center;
  width: 62px;
  height: 64px;
  margin-right: 17px;
  border-radius: 50%;
  background: #2f62e0;
}

.avatar i {
  width: 30px;
  height: 32px;
  border: 3px solid #d7e0f2;
  background: #3a84c8;
  color: #fff;
  font-size: 19px;
  line-height: 26px;
  text-align: center;
}

.logout {
  width: 144px;
  height: 71px;
  margin-left: 33px;
  background: #fff;
  border: 2px solid #e5e7eb;
  border-radius: 10px;
  color: #111;
  font: 500 28px Inter, sans-serif;
}

/* content */
.content {
  position: relative;
  flex: 1;
  display: grid;
  grid-template-columns: 764px 1597px;
  column-gap: 67px;
  align-items: start;
  min-height: 0;
  padding-left: 268px;
  overflow: hidden;
  background: #f9fafb;
}

.fade {
  position: absolute;
  left: 0;
  right: 0;
  bottom: 0;
  height: 76px;
  background: linear-gradient(rgba(214, 216, 220, 0), rgba(214, 216, 220, .7));
}

.form-card {
  padding: 37px 48px 49px;
  background: #fff;
  border-radius: 0 0 16px 16px;
  box-shadow: 0 4px 8px rgba(0, 0, 0, .1), 0 10px 30px rgba(0, 0, 0, .05);
}

.gps {
  display: flex;
  align-items: center;
  color: #111827;
  font-size: 28px;
  font-weight: 500;
}

.checkbox {
  width: 32px;
  height: 32px;
  margin-right: 17px;
  border: 2px solid #3b7ddd;
  border-radius: 6px;
  background: #fff;
}

.gps span {
  margin-left: 8px;
}

.gps-help {
  margin-top: 18px;
  padding-left: 48px;
  color: #6b7280;
  font-size: 24px;
  line-height: 32px;
}

.stops {
  margin-top: 50px;
  padding: 37px 32px 31px;
  background: #f9fafb;
  border: 2px solid #e5e7eb;
  border-radius: 16px;
}

.stops h3 {
  color: #111;
  font-size: 27.5px;
  font-weight: 600;
  line-height: 40px;
}

.field-label {
  color: #374151;
  font-size: 24px;
  font-weight: 500;
  line-height: 32px;
}

.field-label.first { margin-top: 45px; }
.field-label.second { margin-top: 44px; }

.select {
  display: flex;
  align-items: center;
  justify-content: space-between;
  height: 79px;
  margin-top: 21px;
  padding: 0 30px 0 24px;
  background: #fff;
  border: 2px solid #e5e7eb;
  border-radius: 12px;
  color: #6b7280;
  font-size: 28px;
}

.radios {
  display: flex;
  align-items: center;
  height: 32px;
  margin-top: 25px;
  color: #111;
  font-size: 28px;
  font-weight: 500;
}

.radio {
  flex: none;
  width: 32px;
  height: 32px;
  border: 2px solid #3b7ddd;
  border-radius: 50%;
  background: #fff;
}

.radio.checked {
  background: radial-gradient(circle, #3b7ddd 10px, #fff 11px);
}

.r-icon {
  margin: 0 18px;
}

.r-pin {
  margin: 0 21px 0 20px;
}

.r-pickup {
  margin-right: 49px;
}

.add-stop {
  display: flex;
  align-items: center;
  justify-content: center;
  gap: 39px;
  width: 100%;
  height: 80px;
  margin-top: 36px;
  background: #9ab8e1;
  border: 0;
  border-radius: 12px;
  color: #fff;
  font: 500 28px Inter, sans-serif;
}

.create {
  display: block;
  width: 100%;
  height: 96px;
  margin-top: 49px;
  padding-left: 32px;
  background: #9ab8e1;
  border: 0;
  border-radius: 10px;
  color: #fff;
  font: 500 36px Inter, sans-serif;
}

.hint {
  margin-top: 48px;
  color: #6b7280;
  font-size: 28px;
  line-height: 40px;
  text-align: center;
}

/* board */
.board {
  height: 1290px;
  padding: 0 50px 0 49px;
  background: #fff;
  box-shadow: 0 0 8px rgba(0, 0, 0, .18);
}

.alert {
  display: flex;
  height: 53px;
  overflow: hidden;
  padding-left: 32px;
  background: linear-gradient(90deg, #fefce8, #fff7ed);
  border: 4px solid #fadf63;
  border-top: 0;
  border-radius: 0 0 14px 14px;
  box-shadow: 0 6px 10px rgba(0, 0, 0, .12);
}

.alert-who {
  margin-top: -15px;
  color: #b9481d;
  font-size: 24.5px;
  font-weight: 500;
  line-height: 32px;
  white-space: nowrap;
}

.alert-msg {
  margin: -29px 0 0 334px;
  color: #1f2937;
  font-size: 24px;
  line-height: 32px;
  word-spacing: 50px;
  white-space: nowrap;
}

.stage {
  height: 264px;
  padding-top: 38px;
}

.stage h2 {
  display: flex;
  align-items: center;
  height: 44px;
  font-size: 36px;
  font-weight: 600;
  line-height: 44px;
  white-space: pre;
}

.stage em {
  margin-left: 33px;
  color: #2f62e0;
  font-size: 28px;
  font-weight: 600;
}

.c-pending { color: #374151; }
.c-driver { color: #1d4ed8; }
.c-transit { color: #9a6324; }
.c-invoice { color: #6d2fc9; }
.c-payment { color: #b44a22; }

.empty {
  display: flex;
  align-items: center;
  justify-content: center;
  height: 112px;
  margin-top: 39px;
  background: #f9fafb;
  border-radius: 8px;
  color: #4b5563;
  font-size: 32px;
}

/* dock */
.dock {
  position: absolute;
  left: 74px;
  top: 1800px;
  display: flex;
  width: 2926px;
  height: 109px;
  padding-left: 6px;
  background: linear-gradient(90deg, #7e9fd6 0, #7e9fd6 256px, #a89689 470px, #a89689 2480px, #82a0d4 2660px, #8aa7d8 100%);
  border: 1px solid rgba(255, 255, 255, .22);
  border-radius: 26px;
}

.slot {
  position: relative;
  display: flex;
  justify-content: center;
  flex: none;
  width: 91.3px;
  padding-top: 15px;
}

.slot.on::after {
  content: "";
  position: absolute;
  left: 50%;
  top: 99px;
  width: 6px;
  height: 6px;
  margin-left: -3px;
  border-radius: 50%;
  background: #24190f;
}

.slot:nth-child(-n+2).on::after,
.slot:nth-last-child(-n+4).on::after {
  background: #0c2a63;
}

.big {
  flex: none;
  margin-top: -7px;
}

.trash {
  flex: none;
  margin-top: -8px;
}

.badge {
  position: absolute;
  left: 55px;
  top: 6px;
  width: 34px;
  height: 34px;
  border-radius: 17px;
  background: #e5524a;
  color: #fff;
  font-size: 19px;
  font-weight: 400;
  line-height: 34px;
  text-align: center;
}

.badge.wide {
  left: 39px;
  width: 54px;
  font-size: 17px;
}

.ghost {
  margin-top: -16px;
  color: #d8d4cf;
  font-size: 86px;
  font-weight: 500;
  line-height: 100px;
}

.dock-sep {
  flex: none;
  width: 2px;
  height: 82px;
  margin-top: 14px;
  background: rgba(70, 60, 60, .55);
}

.sep-a { margin: 14px 17px 0 21px; }
.sep-b { margin: 14px 21px 0 20px; }
```
